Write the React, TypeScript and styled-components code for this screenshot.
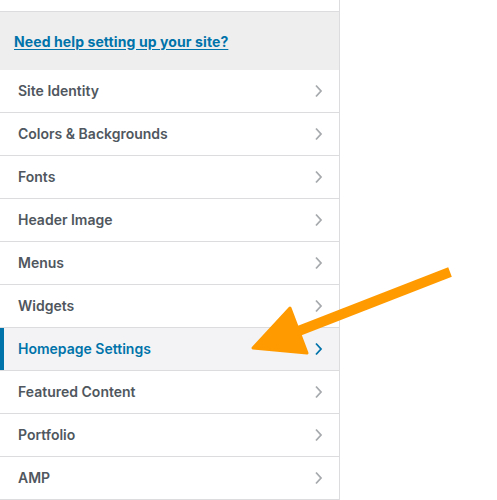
import React from "react";
import styled, { createGlobalStyle, css } from "styled-components";

const Global = createGlobalStyle`
  html, body { margin: 0; padding: 0; background: #fff; }
  body { font-family: Inter, "Noto Sans", sans-serif; -webkit-font-smoothing: antialiased; }
`;

const Page = styled.div`
  position: relative;
  width: 497px;
  height: 500px;
  overflow: hidden;
  background: #fff;
`;

const Panel = styled.div`
  width: 339px;
  border-right: 1px solid #dcdcde;
  height: 500px;
  display: flex;
  flex-direction: column;
`;

const TopSpacer = styled.div`
  height: 11px;
  border-bottom: 1px solid #dcdcde;
`;

const Help = styled.div`
  height: 58px;
  background: #eeeeee;
  display: flex;
  align-items: center;
  padding-left: 14px;
`;

const HelpLink = styled.a`
  color: #0073aa;
  font-size: 14px;
  font-weight: 700;
  letter-spacing: 0.1px;
  text-decoration: underline;
  text-underline-offset: 2px;
`;

const List = styled.ul`
  list-style: none;
  margin: 0;
  padding: 0;
`;

const Row = styled.li<{ $active?: boolean }>`
  height: 42px;
  border-bottom: 1px solid #dcdcde;
  display: flex;
  align-items: center;
  justify-content: space-between;
  padding: 0 16px 2px 18px;
  box-sizing: border-box;
  height: 43px;
  font-size: 14px;
  font-weight: 600;
  color: #50575e;
  background: #fff;
  ${(p) =>
    p.$active &&
    css`
      background: #f3f3f5;
      color: #0073aa;
      box-shadow: inset 4px 0 0 #0073aa;
    `}
`;

const Chevron = styled.svg<{ $active?: boolean }>`
  width: 9px;
  height: 14px;
  flex: none;
  margin-top: 1px;
  color: ${(p) => (p.$active ? "#0073aa" : "#a7aaad")};
`;

const Arrow = styled.svg`
  position: absolute;
  left: 0;
  top: 0;
  pointer-events: none;
`;

const items = [
  "Site Identity",
  "Colors & Backgrounds",
  "Fonts",
  "Header Image",
  "Menus",
  "Widgets",
  "Homepage Settings",
  "Featured Content",
  "Portfolio",
  "AMP",
];

export default function App() {
  return (
    <Page>
      <Global />
      <Panel>
        <TopSpacer />
        <Help>
          <HelpLink href="#">Need help setting up your site?</HelpLink>
        </Help>
        <List>
          {items.map((t) => {
            const active = t === "Homepage Settings";
            return (
              <Row key={t} $active={active}>
                <span>{t}</span>
                <Chevron $active={active} viewBox="0 0 9 14">
                  <polyline
                    points="2,1.5 7,7 2,12.5"
                    fill="none"
                    stroke="currentColor"
                    strokeWidth="1.8"
                  />
                </Chevron>
              </Row>
            );
          })}
        </List>
      </Panel>
      <Arrow width="497" height="500" viewBox="0 0 497 500">
        <line
          x1="450"
          y1="272"
          x2="296"
          y2="332"
          stroke="#ff9a00"
          strokeWidth="10"
        />
        <polygon
          points="253,348 290,308 307,353"
          fill="#ff9a00"
          stroke="#ff9a00"
          strokeWidth="3"
          strokeLinejoin="round"
        />
      </Arrow>
    </Page>
  );
}
